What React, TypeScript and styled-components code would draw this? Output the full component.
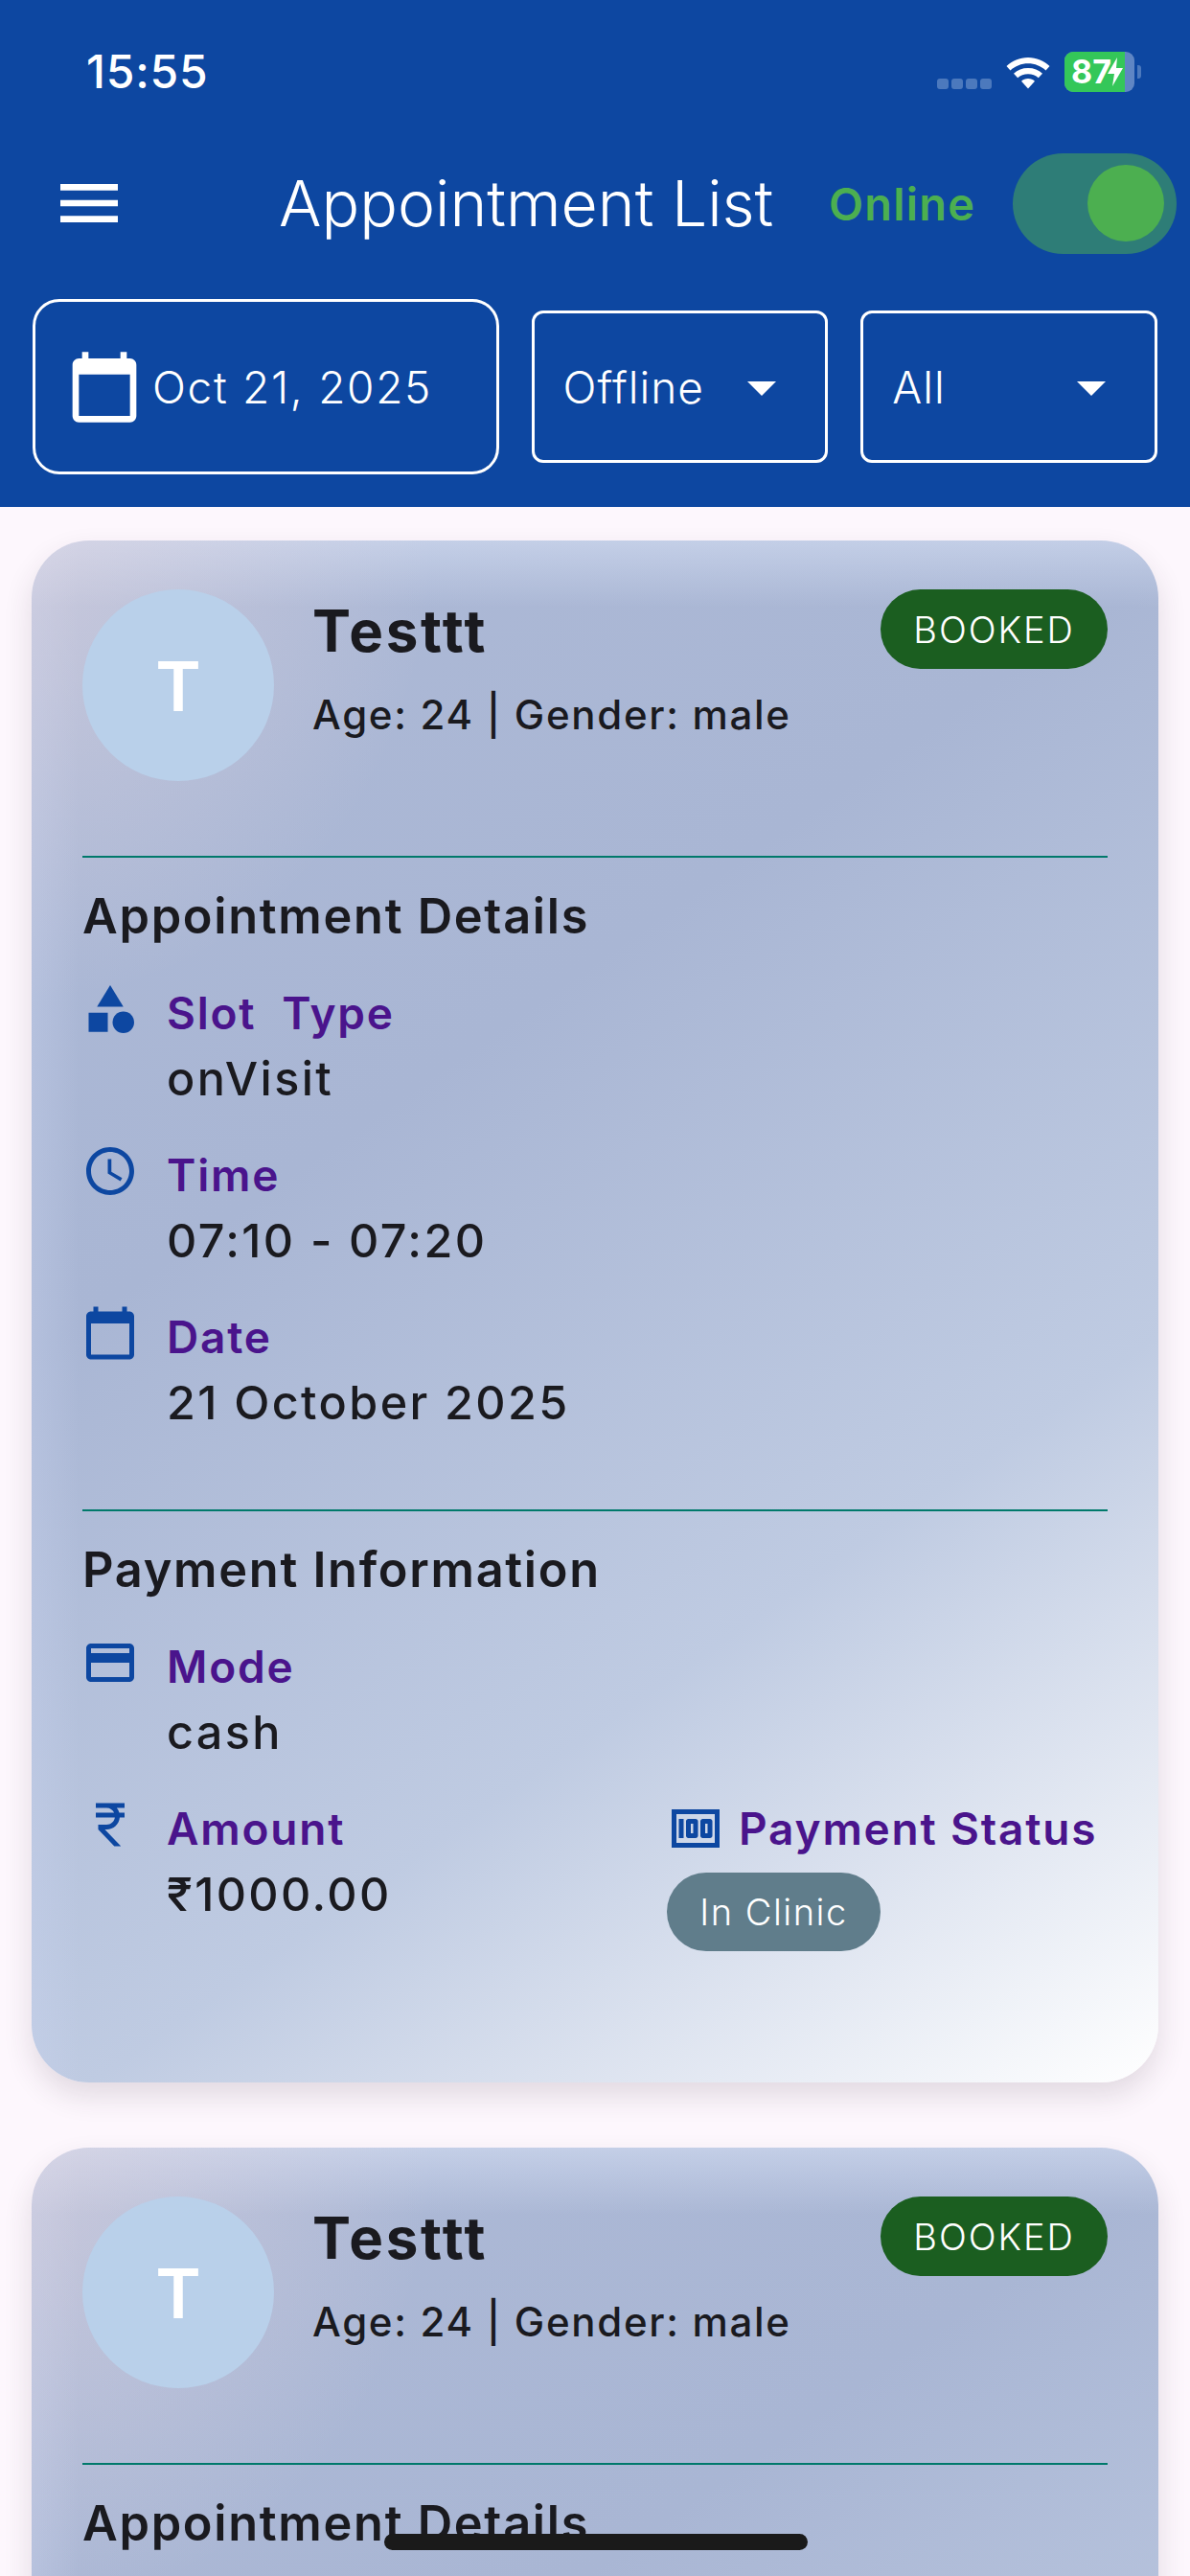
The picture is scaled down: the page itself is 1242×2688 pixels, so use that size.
import React, {FunctionComponent} from "react";
import styled, {createGlobalStyle} from "styled-components";
import {
    MdAccessTime,
    MdArrowDropDown,
    MdCalendarToday,
    MdCategory,
    MdCurrencyRupee,
    MdMenu,
    MdOutlineCreditCard,
    MdOutlineMoney,
} from "react-icons/md";

const GlobalStyle = createGlobalStyle`
  html, body {
    margin: 0;
    padding: 0;
    background: #fdf7fd;
  }
  * {
    box-sizing: border-box;
  }
`;

const StatusIcons: FunctionComponent = () => (
    <StatusRight>
        <SignalDots>
            <SignalDot />
            <SignalDot />
            <SignalDot />
            <SignalDot />
        </SignalDots>
        <svg width="48" height="38" viewBox="0 0 48 38">
            <path d="M24 4C15 4 7.500 7.500 1.500 13L5.500 17.500C10.500 13 17 10.300 24 10.300S37.500 13 42.500 17.500L46.500 13C40.500 7.500 33 4 24 4Z" fill="#fff" />
            <path d="M24 15C18 15 13 17 9 20.800L13.200 25.200C16 22.700 19.800 21.200 24 21.200S32 22.700 34.800 25.200L39 20.800C35 17 30 15 24 15Z" fill="#fff" />
            <path d="M24 26C21.200 26 18.800 27 17 28.700L24 36.500L31 28.700C29.200 27 26.800 26 24 26Z" fill="#fff" />
        </svg>
        <Battery>
            <BatteryFill>87</BatteryFill>
            <svg width="18" height="34" viewBox="0 0 18 32">
                <path d="M11 1L1 18H8L6 31L17 12H10Z" fill="#fff" />
            </svg>
            <BatteryCap />
        </Battery>
    </StatusRight>
);

type InfoProps = {icon: React.ReactNode; label: string; value: string};

const InfoRow: FunctionComponent<InfoProps> = ({icon, label, value}) => (
    <Info>
        <InfoIcon>{icon}</InfoIcon>
        <div>
            <InfoLabel>{label}</InfoLabel>
            <InfoValue>{value}</InfoValue>
        </div>
    </Info>
);

// the second card runs off the bottom of the screen, only its top part is on it
const AppointmentCard: FunctionComponent<{preview?: boolean}> = ({preview}) => (
    <Card>
        <Top>
            <Avatar>T</Avatar>
            <Who>
                <Name>Testtt</Name>
                <Meta>Age: 24 | Gender: male</Meta>
            </Who>
            <Booked>BOOKED</Booked>
        </Top>
        <Divider />
        <SectionTitle>Appointment Details</SectionTitle>
        {!preview && <>
            <InfoRow icon={<MdCategory />} label="Slot  Type" value="onVisit" />
            <InfoRow icon={<MdAccessTime />} label="Time" value="07:10 - 07:20" />
            <InfoRow icon={<MdCalendarToday />} label="Date" value="21 October 2025" />
            <Divider $top={81} />
            <SectionTitle>Payment Information</SectionTitle>
            <InfoRow icon={<MdOutlineCreditCard />} label="Mode" value="cash" />
            <AmountRow>
                <InfoRow icon={<MdCurrencyRupee />} label="Amount" value="₹1000.00" />
                <StatusBlock>
                    <StatusHead>
                        <StatusIcon><MdOutlineMoney /></StatusIcon>
                        <InfoLabel>Payment Status</InfoLabel>
                    </StatusHead>
                    <ClinicPill>In Clinic</ClinicPill>
                </StatusBlock>
            </AmountRow>
        </>}
    </Card>
);

export default function App() {
    return (
        <Page>
            <GlobalStyle />
            <Header>
                <StatusBar>
                    <Clock>15:55</Clock>
                    <StatusIcons />
                </StatusBar>
                <Toolbar>
                    <MenuButton><MdMenu /></MenuButton>
                    <Title>Appointment List</Title>
                    <OnlineLabel>Online</OnlineLabel>
                    <Toggle><Thumb /></Toggle>
                </Toolbar>
                <Filters>
                    <DateButton>
                        <DateIcon><MdCalendarToday /></DateIcon>
                        Oct 21, 2025
                    </DateButton>
                    <Select>
                        Offline
                        <Caret><MdArrowDropDown /></Caret>
                    </Select>
                    <Select>
                        All
                        <Caret><MdArrowDropDown /></Caret>
                    </Select>
                </Filters>
            </Header>
            <List>
                <AppointmentCard />
                <AppointmentCard preview />
            </List>
            <HomeIndicator />
        </Page>
    );
}

const font = `Inter, "Noto Sans", sans-serif`;

const Page = styled.div`
  position: relative;
  width: 1242px;
  height: 2688px;
  overflow: hidden;
  background: #fdf7fd;
  font-family: ${font};
`;

const Header = styled.header`
  height: 529px;
  background: #0d47a1;
  color: white;
`;

const StatusBar = styled.div`
  height: 131px;
  padding: 50px 58px 0 90px;
  display: flex;
  justify-content: space-between;
  align-items: flex-start;
`;

const Clock = styled.div`
  font-size: 48px;
  font-weight: 500;
  letter-spacing: 0.800px;
  line-height: 50px;
`;

const StatusRight = styled.div`
  display: flex;
  align-items: center;
  gap: 14px;
  height: 50px;
`;

const SignalDots = styled.div`
  display: flex;
  gap: 3px;
  margin-top: 24px;
`;

const SignalDot = styled.span`
  width: 12px;
  height: 11px;
  border-radius: 3px;
  background: #4c79bd;
`;

const Battery = styled.div`
  position: relative;
  width: 73px;
  height: 42px;
  border-radius: 9px;
  background: #5f86c4;
  display: flex;
  align-items: center;
  & > svg {
    position: absolute;
    left: 44px;
    top: 4px;
  }
`;

const BatteryFill = styled.div`
  width: 63px;
  height: 100%;
  border-radius: 9px 0 0 9px;
  background: #34c759;
  padding-left: 7px;
  font-size: 34px;
  font-weight: 700;
  line-height: 42px;
  color: white;
`;

const BatteryCap = styled.span`
  position: absolute;
  right: -7px;
  top: 14px;
  width: 4px;
  height: 14px;
  border-radius: 0 3px 3px 0;
  background: #4c79bd;
`;

const Toolbar = styled.div`
  height: 162px;
  margin-bottom: 19px;
  display: flex;
  align-items: center;
`;

const MenuButton = styled.div`
  width: 291px;
  padding-left: 53px;
  display: flex;
  font-size: 80px;
  svg {
    display: block;
  }
`;

const Title = styled.div`
  width: 574px;
  font-size: 66px;
  font-weight: 300;
  white-space: nowrap;
`;

const OnlineLabel = styled.div`
  width: 192px;
  font-size: 47px;
  font-weight: 600;
  color: #4caf50;
  letter-spacing: 1.200px;
`;

const Toggle = styled.div`
  width: 171px;
  height: 105px;
  border-radius: 53px;
  background: #2e7d77;
  display: flex;
  align-items: center;
  justify-content: flex-end;
  padding-right: 13px;
`;

const Thumb = styled.span`
  width: 80px;
  height: 80px;
  border-radius: 50%;
  background: #4caf50;
`;

const Filters = styled.div`
  padding: 0 34px;
  display: flex;
  align-items: center;
  gap: 34px;
  height: 183px;
`;

const DateButton = styled.div`
  width: 487px;
  height: 183px;
  border: 3px solid white;
  border-radius: 28px;
  display: flex;
  align-items: center;
  padding-left: 32px;
  gap: 10px;
  font-size: 46px;
  letter-spacing: 1.700px;
  font-weight: 300;
`;

const DateIcon = styled.span`
  font-size: 80px;
  display: flex;
`;

const Select = styled.div`
  width: 310px;
  height: 159px;
  border: 3px solid white;
  border-radius: 12px;
  display: flex;
  align-items: center;
  justify-content: space-between;
  padding: 0 30px;
  font-size: 46px;
  letter-spacing: 1px;
  font-weight: 300;
`;

const Caret = styled.span`
  font-size: 72px;
  display: flex;
`;

const List = styled.div`
  padding: 35px 33px 0;
  display: flex;
  flex-direction: column;
  gap: 68px;
`;

const Card = styled.div`
  height: 1609px;
  flex-shrink: 0;
  border-radius: 60px;
  padding: 51px 53px;
  color: #1a1a1f;
  background:
    radial-gradient(ellipse 420px 480px at 0 0, rgba(228, 216, 226, 0.5), transparent),
    linear-gradient(180deg, rgba(216, 226, 246, 0.55) 0, transparent 70px),
    linear-gradient(90deg, rgba(205, 215, 242, 0.3) 0, transparent 50px),
    linear-gradient(145deg, #adb9d6 0%, #a9b6d4 35%, #bfcbe2 68%, #ffffff 100%);
  box-shadow: 0 14px 30px rgba(60, 40, 60, 0.14);
`;

const Top = styled.div`
  display: flex;
  align-items: flex-start;
  height: 278px;
`;

const Avatar = styled.div`
  width: 200px;
  height: 200px;
  border-radius: 50%;
  background: #b9d0ea;
  color: white;
  font-size: 72px;
  font-weight: 600;
  display: flex;
  align-items: center;
  justify-content: center;
  margin-right: 40px;
`;

const Who = styled.div`
  flex: 1;
  padding-top: 8px;
`;

const Name = styled.div`
  font-size: 60px;
  font-weight: 700;
  letter-spacing: 2.800px;
  line-height: 70px;
`;

const Meta = styled.div`
  font-size: 42px;
  font-weight: 500;
  letter-spacing: 1.700px;
  line-height: 50px;
  margin-top: 28px;
`;

const Booked = styled.div`
  width: 237px;
  height: 83px;
  border-radius: 42px;
  background: #1b5e20;
  color: white;
  font-size: 38px;
  letter-spacing: 1.900px;
  font-weight: 300;
  display: flex;
  align-items: center;
  justify-content: center;
`;

const Divider = styled.div<{$top?: number}>`
  height: 2px;
  background: #00796b;
  margin-top: ${p => p.$top ?? 0}px;
`;

const SectionTitle = styled.div`
  font-size: 50.500px;
  font-weight: 600;
  letter-spacing: 1.700px;
  line-height: 60px;
  margin: 31px 0 44px;
`;

const Info = styled.div`
  display: flex;
  margin-bottom: 43px;
`;

const InfoIcon = styled.div`
  width: 89px;
  font-size: 60px;
  margin-left: -1px;
  color: #0d47a1;
  display: flex;
  align-items: flex-start;
  svg {
    display: block;
    margin-top: -7px;
  }
`;

const InfoLabel = styled.div`
  font-size: 46px;
  font-weight: 600;
  letter-spacing: 1.800px;
  color: #4a148c;
  line-height: 54px;
  white-space: pre;
`;

const InfoValue = styled.div`
  font-size: 48.500px;
  font-weight: 500;
  letter-spacing: 2.400px;
  line-height: 60px;
  margin-top: 12px;
`;

const AmountRow = styled.div`
  display: flex;
  justify-content: space-between;
`;

const StatusBlock = styled.div`
  width: 460px;
`;

const StatusHead = styled.div`
  display: flex;
  align-items: center;
  gap: 15px;
  height: 54px;
`;

const StatusIcon = styled.span`
  font-size: 60px;
  color: #0d47a1;
  display: flex;
`;

const ClinicPill = styled.div`
  width: 223px;
  height: 82px;
  margin-top: 19px;
  border-radius: 41px;
  background: #607d8b;
  color: white;
  font-size: 38px;
  letter-spacing: 1.500px;
  font-weight: 300;
  display: flex;
  align-items: center;
  justify-content: center;
`;

const HomeIndicator = styled.div`
  position: absolute;
  left: 401px;
  top: 2644px;
  width: 442px;
  height: 17px;
  border-radius: 9px;
  background: #1a1a1a;
`;
